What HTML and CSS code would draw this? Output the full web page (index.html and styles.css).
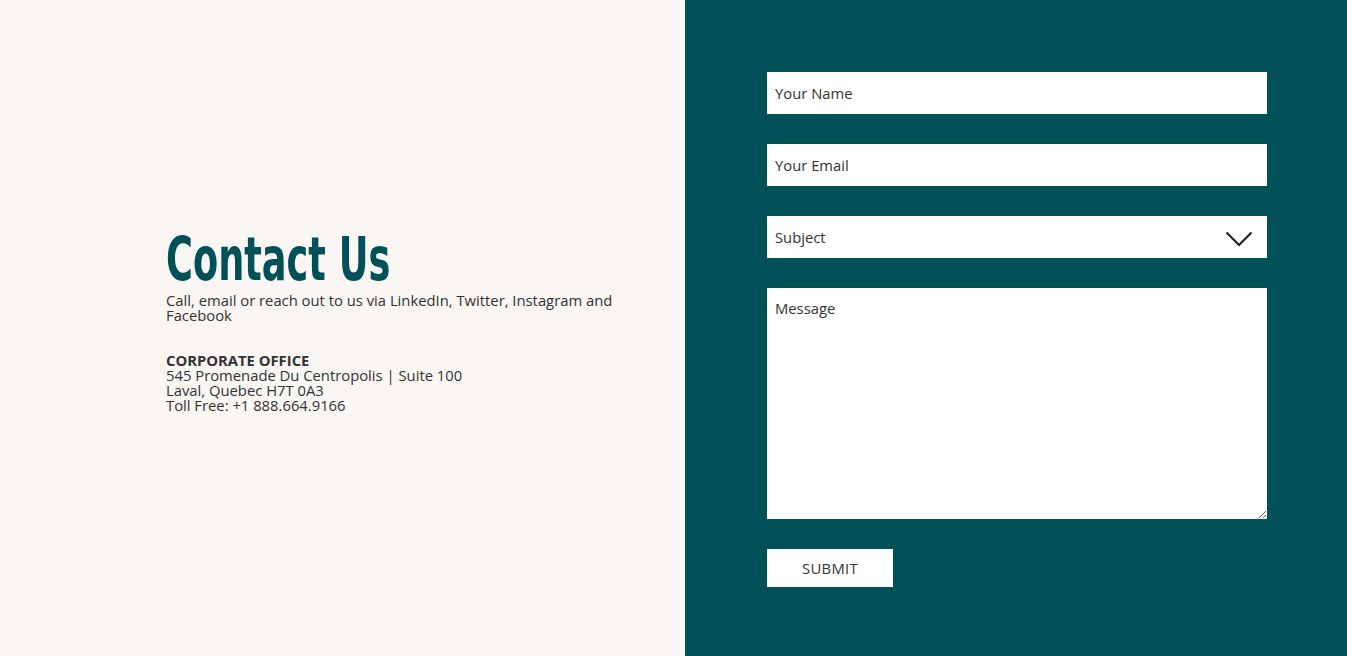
FILE: index.html
```html
<!DOCTYPE html>
<html lang="en">
<head>
<meta charset="utf-8">
<title>Contact Us</title>
<link rel="stylesheet" href="styles.css">
</head>
<body>
<main class="page">
  <section class="info">
    <div class="info-inner">
      <h1 class="title"><span class="title-text">Contact Us</span></h1>
      <p class="lead">Call, email or reach out to us via LinkedIn, Twitter, Instagram and Facebook</p>
      <p class="office"><strong>CORPORATE OFFICE</strong><br>545 Promenade Du Centropolis | Suite 100<br>Laval, Quebec H7T 0A3<br>Toll Free: +1 888.664.9166</p>
    </div>
  </section>
  <section class="form-panel">
    <form class="form">
      <input class="field" type="text" placeholder="Your Name">
      <input class="field" type="email" placeholder="Your Email">
      <div class="select-wrap">
        <select class="field select">
          <option>Subject</option>
        </select>
        <svg class="chevron" width="28" height="16" viewBox="0 0 28 16"><path d="M1.5 1.5 L14 14 L26.5 1.5" fill="none" stroke="#222" stroke-width="2.2"/></svg>
      </div>
      <textarea class="field message" placeholder="Message"></textarea>
      <button class="submit" type="button">SUBMIT</button>
    </form>
  </section>
</main>
</body>
</html>
```

FILE: styles.css
```css
* { box-sizing: border-box; }
html, body { margin: 0; padding: 0; height: 100%; }
body {
  font-family: "Open Sans", "Noto Sans", sans-serif;
  color: #333;
}
.page {
  display: flex;
  height: 656px;
}
.info {
  width: 685px;
  background: #f9f6f3;
  display: flex;
  align-items: center;
  padding: 0 0 12px 166px;
}
.info-inner { width: 470px; }
.title {
  font-family: "DejaVu Sans Condensed", "DejaVu Sans", sans-serif;
  font-weight: 700;
  font-size: 60px;
  line-height: 60px;
  color: #005057;
  margin: -2px 0 0;
  white-space: nowrap;
}
.title-text {
  display: inline-block;
  transform: scaleX(0.68);
  transform-origin: left center;
}
.lead {
  margin: 4px 0 0;
  font-size: 14.8px;
  line-height: 15px;
}
.office {
  margin: 30px 0 0;
  font-size: 14.8px;
  line-height: 15px;
}
.office strong { font-weight: 700; }
.form-panel {
  flex: 1;
  background: #005057;
  padding: 72px 0 0 82px;
}
.form {
  width: 500px;
  display: flex;
  flex-direction: column;
  gap: 30px;
  align-items: flex-start;
}
.field {
  width: 500px;
  height: 42px;
  border: none;
  outline: none;
  background: #fff;
  padding: 0 8px 1px;
  font-family: "Open Sans", "Noto Sans", sans-serif;
  font-size: 14.8px;
  color: #333;
  border-radius: 0;
  margin: 0;
}
.field::placeholder { color: #333; opacity: 1; }
.select-wrap { position: relative; width: 500px; height: 42px; }
.select { appearance: none; -webkit-appearance: none; display: block; }
.chevron { position: absolute; left: 458px; top: 15px; pointer-events: none; }
.message {
  height: 231px;
  padding: 11px 8px;
  resize: vertical;
  display: block;
  line-height: 18px;
}
.submit {
  width: 126px;
  height: 38px;
  background: #fff;
  border: none;
  border-radius: 0;
  font-family: "Open Sans", "Noto Sans", sans-serif;
  font-size: 14.8px;
  color: #333;
  letter-spacing: 0.3px;
  padding-bottom: 1px;
  cursor: pointer;
}
```
